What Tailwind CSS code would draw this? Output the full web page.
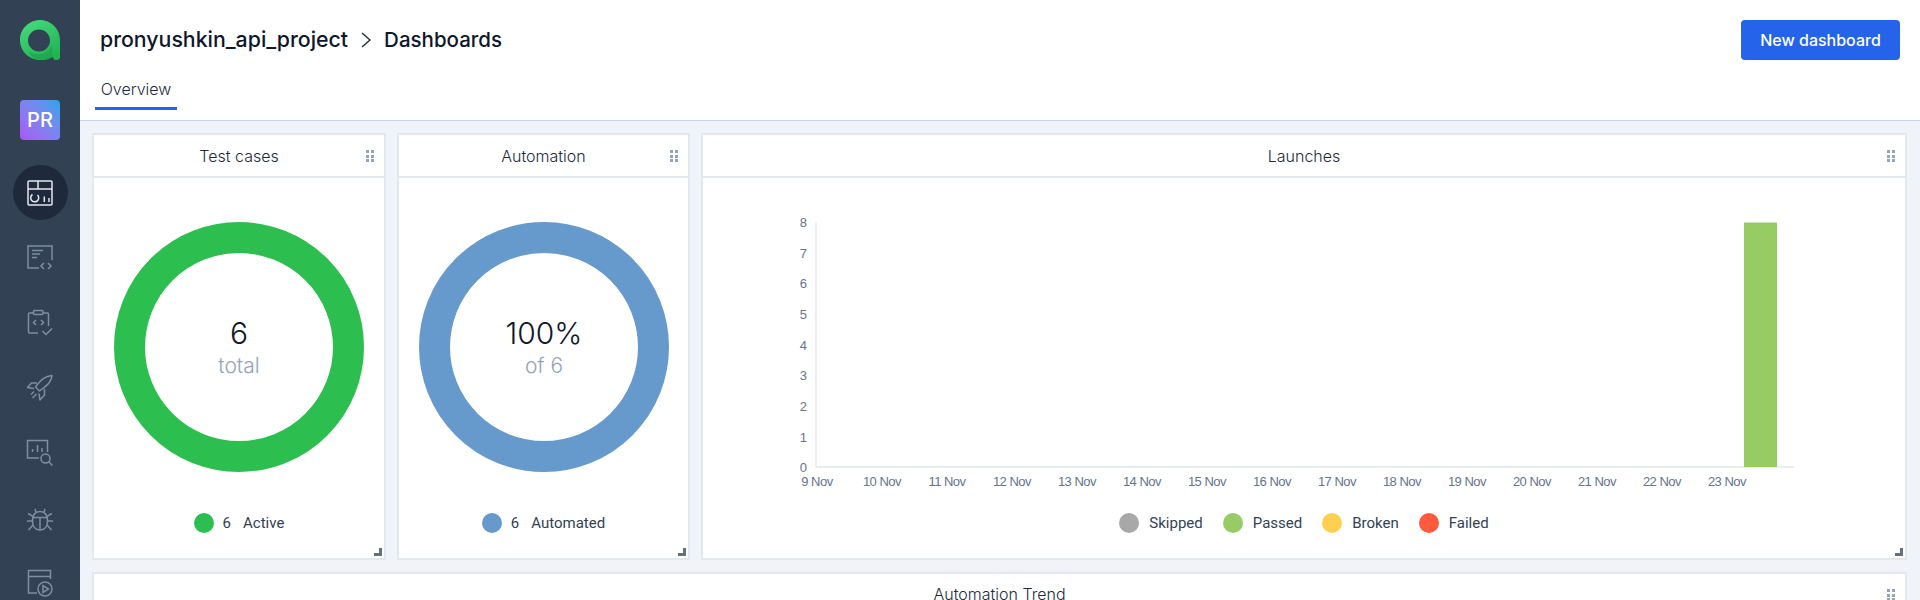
<!DOCTYPE html>
<html lang="en">
<head>
    <meta charset="UTF-8">
    <title>Dashboards</title>
    <script src="https://cdn.jsdelivr.net/npm/@tailwindcss/browser@4"></script>
</head>
<body class="h-[600px] overflow-hidden bg-[#f0f3f8] font-['Inter',sans-serif]">
    <div class="flex h-[600px]">
        <!-- sidebar -->
        <aside class="w-[80px] shrink-0 h-full bg-[#334155] flex flex-col items-center pt-[20px] overflow-hidden">
            <svg class="w-[40px] h-[40px] shrink-0" viewBox="0 0 40 40">
                <defs>
                    <linearGradient id="logoGrad" x1="0" y1="0" x2="0.6" y2="1">
                        <stop offset="0" stop-color="#4ade80"/>
                        <stop offset="1" stop-color="#22b455"/>
                    </linearGradient>
                </defs>
                <path fill="url(#logoGrad)" fill-rule="evenodd" d="M20 0C31 0 40 9 40 20V36.500A3.500 3.500 0 0 1 33 36.500 20 20 0 0 1 20 40C9 40 0 31 0 20S9 0 20 0ZM19 9.500A11 11 0 1 0 19 31.500 11 11 0 1 0 19 9.500Z"/>
                <path fill="#1fa64c" d="M8 31C16 36 27 36 31 26L31.500 24 33 37C30 39 25 40 20 40 15 40 11 37 8 31Z" opacity="0.75"/>
            </svg>
            <div class="w-[40px] h-[40px] mt-[40px] mb-[20px] shrink-0 rounded bg-gradient-to-tr from-[#a855f7] to-[#0ea5e9] flex items-center justify-center text-white text-[20px] font-medium">PR</div>

            <div class="h-[65px] w-full shrink-0 flex items-center justify-center">
                <div class="w-[55px] h-[55px] rounded-full bg-[#1e293b] flex items-center justify-center">
                    <svg class="w-[26px] h-[26px]" viewBox="0 0 26 26" fill="none" stroke="#e2e8f0" stroke-width="1.500">
                        <rect x="1" y="1" width="24" height="24" rx="1"/>
                        <path d="M1 9H25M11 1V9"/>
                        <path d="M10.500 15A4 4 0 1 1 5.500 14.500"/>
                        <path d="M17.300 16.500V22M22 18V22"/>
                    </svg>
                </div>
            </div>
            <div class="h-[65px] w-full shrink-0 flex items-center justify-center">
                <svg class="w-[28px] h-[28px]" viewBox="0 0 28 28" fill="none" stroke="#7f8ea3" stroke-width="1.500">
                    <path d="M13 24H2V2H26V16"/>
                    <path d="M6 6.500H17M6 10H14M6 13.500H11"/>
                    <path d="M18 19L15 22L18 25M22 19L25 22L22 25"/>
                </svg>
            </div>
            <div class="h-[65px] w-full shrink-0 flex items-center justify-center">
                <svg class="w-[28px] h-[28px]" viewBox="0 0 28 28" fill="none" stroke="#7f8ea3" stroke-width="1.500">
                    <path d="M12 24H3.500A1 1 0 0 1 2.500 23V5A1 1 0 0 1 3.500 4H7M17 4H21.500A1 1 0 0 1 22.500 5V17"/>
                    <rect x="7.500" y="1.500" width="9.500" height="4" rx="1"/>
                    <path d="M10 11L7.500 13.500L10 16M15 11L17.500 13.500L15 16"/>
                    <path d="M16.500 22L20 25.500L26 19.500"/>
                </svg>
            </div>
            <div class="h-[65px] w-full shrink-0 flex items-center justify-center">
                <svg class="w-[28px] h-[28px]" viewBox="0 0 28 28" fill="none" stroke="#7f8ea3" stroke-width="1.500" stroke-linejoin="round">
                    <path d="M26 1.500C19.500 2 15.500 5 9.500 13L13.500 17C22 11 25.500 7.500 26 1.500Z"/>
                    <path d="M11 9H5.500L1.500 13.500L8 14.500"/>
                    <path d="M18.500 15V21L14 26L13 19.500"/>
                    <path d="M8 17.500L5 20.500M10.500 20L6.500 24"/>
                </svg>
            </div>
            <div class="h-[65px] w-full shrink-0 flex items-center justify-center">
                <svg class="w-[28px] h-[28px]" viewBox="0 0 28 28" fill="none" stroke="#7f8ea3" stroke-width="1.500">
                    <path d="M13 19H1.500V1.500H21.500V13"/>
                    <path d="M6.500 13V10M11.500 13V6M16 13V9"/>
                    <circle cx="19.500" cy="19.500" r="4.500"/>
                    <path d="M23 23L26.500 26.500"/>
                </svg>
            </div>
            <div class="h-[65px] w-full shrink-0 flex items-center justify-center">
                <svg class="w-[28px] h-[28px]" viewBox="0 0 28 28" fill="none" stroke="#7f8ea3" stroke-width="1.500">
                    <path d="M14 26C9 26 6.500 22 6.500 17C6.500 11.500 9 7.500 14 7.500S21.500 11.500 21.500 17C21.500 22 19 26 14 26Z"/>
                    <path d="M6.500 13.500H21.500M14 13.500V26M10 8.500L9 5M18 8.500L19 5"/>
                    <path d="M6.500 12L2 9.500M21.500 12L26 9.500M1 17H6.500M21.500 17H27M7 21L2.500 26M21 21L25.500 26"/>
                </svg>
            </div>
            <div class="h-[65px] w-full shrink-0 flex items-center justify-center">
                <svg class="w-[28px] h-[28px]" viewBox="0 0 28 28" fill="none" stroke="#7f8ea3" stroke-width="1.500">
                    <path d="M11 24H2.500V1.500H24.500V10M2.500 7.500H24.500"/>
                    <circle cx="19" cy="20" r="7"/>
                    <path d="M17 16.500V23.500L22.500 20Z"/>
                </svg>
            </div>
        </aside>

        <main class="flex-1 min-w-0 flex flex-col">
            <!-- page header -->
            <header class="h-[121px] shrink-0 bg-white border-b border-[#cbd5e1] px-[15px] relative">
                <div class="flex items-start justify-between pt-[20px] pr-[5px]">
                    <div class="flex items-center h-[40px] pl-[5px] font-medium text-[#0f172a]">
                        <span class="text-[21.300px]">pronyushkin_api_project</span>
                        <svg class="w-[10px] h-[16px] mx-[13px]" viewBox="0 0 10 16" fill="none" stroke="#1e293b" stroke-width="1.400"><path d="M1 1L9 8L1 15"/></svg>
                        <span class="text-[20.500px]">Dashboards</span>
                    </div>
                    <button class="w-[159px] h-[40px] rounded bg-[#2563eb] text-white text-[16px] font-medium">New dashboard</button>
                </div>
                <div class="mt-[19px] w-[82px] h-[31px] border-b-[3px] border-[#2563eb] text-[16px] font-light text-[#1e293b] text-center leading-[20px]">Overview</div>
            </header>

            <!-- widgets -->
            <div class="flex-1 min-h-0 overflow-hidden pl-[12px] pr-[13px] pt-[12px]">
                <div class="grid grid-cols-[294px_293px_1fr] gap-x-[11px] gap-y-[12px]">

                    <section class="h-[427px] bg-white border-2 border-[#e2e8f0] relative">
                        <div class="h-[41px] border-b-2 border-[#e2e8f0] box-content flex items-center justify-center text-[16px] font-light text-[#1e293b] relative">
                            Test cases
                            <div class="absolute right-[10px] top-[15px] grid grid-cols-2 gap-x-[2px] gap-y-[1.500px]">
                                <i class="w-[3px] h-[3px] bg-[#94a3b8]"></i><i class="w-[3px] h-[3px] bg-[#94a3b8]"></i><i class="w-[3px] h-[3px] bg-[#94a3b8]"></i><i class="w-[3px] h-[3px] bg-[#94a3b8]"></i><i class="w-[3px] h-[3px] bg-[#94a3b8]"></i><i class="w-[3px] h-[3px] bg-[#94a3b8]"></i>
                            </div>
                        </div>
                        <div class="pt-[44px] flex flex-col items-center">
                            <svg class="w-[250px] h-[250px]" viewBox="0 0 250 250">
                                <circle cx="125" cy="125" r="109.500" fill="none" stroke="#2dbe50" stroke-width="31"/>
                                <text x="125" y="122" text-anchor="middle" font-size="30" font-weight="300" fill="#0f172a">6</text>
                                <text x="125" y="151" text-anchor="middle" font-size="21" font-weight="300" fill="#94a3b8">total</text>
                            </svg>
                            <div class="mt-[41px] h-[20px] flex items-center text-[15px] font-['Roboto',sans-serif] text-[#334155]">
                                <span class="w-[20px] h-[20px] rounded-full bg-[#2dbe50] mr-[9px]"></span>
                                <span class="mr-[12px]">6</span>
                                <span>Active</span>
                            </div>
                        </div>
                        <div class="absolute right-[2px] bottom-[2px] w-[8px] h-[8px] border-r-[3px] border-b-[3px] border-[#666f7c] [clip-path:polygon(100%_0,100%_100%,0_100%,0_60%,60%_60%,60%_0)]"></div>
                    </section>

                    <section class="h-[427px] bg-white border-2 border-[#e2e8f0] relative">
                        <div class="h-[41px] border-b-2 border-[#e2e8f0] box-content flex items-center justify-center text-[16px] font-light text-[#1e293b] relative">
                            Automation
                            <div class="absolute right-[10px] top-[15px] grid grid-cols-2 gap-x-[2px] gap-y-[1.500px]">
                                <i class="w-[3px] h-[3px] bg-[#94a3b8]"></i><i class="w-[3px] h-[3px] bg-[#94a3b8]"></i><i class="w-[3px] h-[3px] bg-[#94a3b8]"></i><i class="w-[3px] h-[3px] bg-[#94a3b8]"></i><i class="w-[3px] h-[3px] bg-[#94a3b8]"></i><i class="w-[3px] h-[3px] bg-[#94a3b8]"></i>
                            </div>
                        </div>
                        <div class="pt-[44px] flex flex-col items-center">
                            <svg class="w-[250px] h-[250px]" viewBox="0 0 250 250">
                                <circle cx="125" cy="125" r="109.500" fill="none" stroke="#6699cc" stroke-width="31"/>
                                <text x="125" y="122" text-anchor="middle" font-size="30" font-weight="300" fill="#0f172a">100%</text>
                                <text x="125" y="151" text-anchor="middle" font-size="21" font-weight="300" fill="#94a3b8">of 6</text>
                            </svg>
                            <div class="mt-[41px] h-[20px] flex items-center text-[15px] font-['Roboto',sans-serif] text-[#334155]">
                                <span class="w-[20px] h-[20px] rounded-full bg-[#6699cc] mr-[9px]"></span>
                                <span class="mr-[12px]">6</span>
                                <span>Automated</span>
                            </div>
                        </div>
                        <div class="absolute right-[2px] bottom-[2px] w-[8px] h-[8px] border-r-[3px] border-b-[3px] border-[#666f7c] [clip-path:polygon(100%_0,100%_100%,0_100%,0_60%,60%_60%,60%_0)]"></div>
                    </section>

                    <section class="h-[427px] bg-white border-2 border-[#e2e8f0] relative">
                        <div class="h-[41px] border-b-2 border-[#e2e8f0] box-content flex items-center justify-center text-[16px] font-light text-[#1e293b] relative">
                            Launches
                            <div class="absolute right-[10px] top-[15px] grid grid-cols-2 gap-x-[2px] gap-y-[1.500px]">
                                <i class="w-[3px] h-[3px] bg-[#94a3b8]"></i><i class="w-[3px] h-[3px] bg-[#94a3b8]"></i><i class="w-[3px] h-[3px] bg-[#94a3b8]"></i><i class="w-[3px] h-[3px] bg-[#94a3b8]"></i><i class="w-[3px] h-[3px] bg-[#94a3b8]"></i><i class="w-[3px] h-[3px] bg-[#94a3b8]"></i>
                            </div>
                        </div>
                        <svg class="block w-[1202px] h-[324px]" viewBox="703 178 1202 324" font-family="'Liberation Sans',sans-serif" font-size="13" letter-spacing="-0.5" fill="#64748b">
                            <path d="M816 222.500V467H1794" fill="none" stroke="#e2e8f0" stroke-width="1.500"/>
                            <rect x="1744" y="222.500" width="33" height="244.500" fill="#97cc64"/>
                            <g text-anchor="middle">
                                <text x="803" y="227">8</text>
                                <text x="803" y="257.500">7</text>
                                <text x="803" y="288">6</text>
                                <text x="803" y="319">5</text>
                                <text x="803" y="349.500">4</text>
                                <text x="803" y="380">3</text>
                                <text x="803" y="411">2</text>
                                <text x="803" y="441.500">1</text>
                                <text x="803" y="472">0</text>
                                <text x="817" y="486">9 Nov</text>
                                <text x="882" y="486">10 Nov</text>
                                <text x="947" y="486">11 Nov</text>
                                <text x="1012" y="486">12 Nov</text>
                                <text x="1077" y="486">13 Nov</text>
                                <text x="1142" y="486">14 Nov</text>
                                <text x="1207" y="486">15 Nov</text>
                                <text x="1272" y="486">16 Nov</text>
                                <text x="1337" y="486">17 Nov</text>
                                <text x="1402" y="486">18 Nov</text>
                                <text x="1467" y="486">19 Nov</text>
                                <text x="1532" y="486">20 Nov</text>
                                <text x="1597" y="486">21 Nov</text>
                                <text x="1662" y="486">22 Nov</text>
                                <text x="1727" y="486">23 Nov</text>
                            </g>
                        </svg>
                        <div class="mt-[11px] h-[20px] flex items-center justify-center gap-[20px] text-[15px] font-['Roboto',sans-serif] text-[#334155]">
                            <div class="flex items-center gap-[10px]"><span class="w-[20px] h-[20px] rounded-full bg-[#a8a8a8]"></span>Skipped</div>
                            <div class="flex items-center gap-[10px]"><span class="w-[20px] h-[20px] rounded-full bg-[#97cc64]"></span>Passed</div>
                            <div class="flex items-center gap-[10px]"><span class="w-[20px] h-[20px] rounded-full bg-[#ffd050]"></span>Broken</div>
                            <div class="flex items-center gap-[10px]"><span class="w-[20px] h-[20px] rounded-full bg-[#fd5a3e]"></span>Failed</div>
                        </div>
                        <div class="absolute right-[2px] bottom-[2px] w-[8px] h-[8px] border-r-[3px] border-b-[3px] border-[#666f7c] [clip-path:polygon(100%_0,100%_100%,0_100%,0_60%,60%_60%,60%_0)]"></div>
                    </section>

                    <section class="col-span-3 h-[300px] bg-white border-2 border-[#e2e8f0]">
                        <div class="h-[40px] flex items-center justify-center text-[16px] font-light text-[#1e293b] relative">
                            Automation Trend
                            <div class="absolute right-[10px] top-[15px] grid grid-cols-2 gap-x-[2px] gap-y-[1.500px]">
                                <i class="w-[3px] h-[3px] bg-[#94a3b8]"></i><i class="w-[3px] h-[3px] bg-[#94a3b8]"></i><i class="w-[3px] h-[3px] bg-[#94a3b8]"></i><i class="w-[3px] h-[3px] bg-[#94a3b8]"></i><i class="w-[3px] h-[3px] bg-[#94a3b8]"></i><i class="w-[3px] h-[3px] bg-[#94a3b8]"></i>
                            </div>
                        </div>
                    </section>
                </div>
            </div>
        </main>
    </div>
</body>
</html>
